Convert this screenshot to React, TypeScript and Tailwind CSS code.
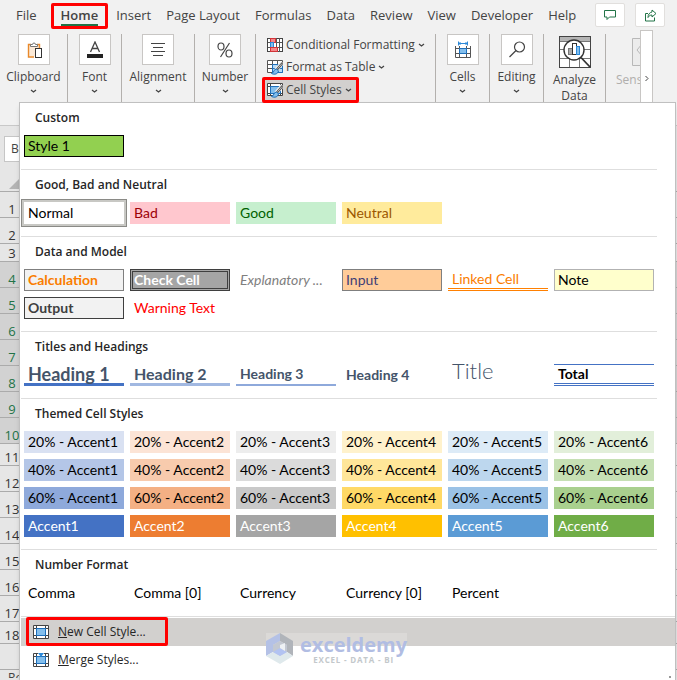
import React from 'react';

const ROWS = Array.from({ length: 18 }, (_, i) => i + 1);

type CellStyle = { name: string; className: string };

const SECTIONS: { title: string; cells: CellStyle[] }[] = [
  { title: 'Custom', cells: [{ name: 'Style 1', className: 'bg-[#92d050] border border-black px-[3px] text-sm text-black' }] },
  {
    title: 'Good, Bad and Neutral',
    cells: [
      { name: 'Normal', className: 'bg-white px-1 text-sm text-black outline-2 outline-[#c8c8c4] ring-3 ring-[#8a8a86]' },
      { name: 'Bad', className: 'bg-[#ffc7ce] px-1 text-sm text-[#9c0006]' },
      { name: 'Good', className: 'bg-[#c6efce] px-1 text-sm text-[#006100]' },
      { name: 'Neutral', className: 'bg-[#ffeb9c] px-1 text-sm text-[#9c5700]' },
    ],
  },
  {
    title: 'Data and Model',
    cells: [
      { name: 'Calculation', className: 'bg-[#f2f2f2] border border-[#7f7f7f] px-[3px] text-sm font-bold text-[#fa7d00]' },
      { name: 'Check Cell', className: 'bg-[#a5a5a5] border-3 border-double border-[#3f3f3f] px-px text-sm font-bold text-white' },
      { name: 'Explanatory ...', className: 'px-1 text-sm italic text-[#7f7f7f]' },
      { name: 'Input', className: 'bg-[#ffcc99] border border-[#7f7f7f] px-[3px] text-sm text-[#3f3f76]' },
      { name: 'Linked Cell', className: 'border-b-3 border-double border-[#ff8001] px-1 text-sm text-[#fa7d00]' },
      { name: 'Note', className: 'bg-[#ffffcc] border border-[#b2b2b2] px-[3px] text-sm text-black' },
      { name: 'Output', className: 'bg-[#f2f2f2] border border-[#3f3f3f] px-[3px] text-sm font-bold text-[#3f3f3f]' },
      { name: 'Warning Text', className: 'px-1 text-sm text-[#ff0000]' },
    ],
  },
  {
    title: 'Titles and Headings',
    cells: [
      { name: 'Heading 1', className: 'border-b-3 border-[#4472c4] px-1 text-lg font-bold text-[#44546a]' },
      { name: 'Heading 2', className: 'border-b-3 border-[#a1b8e1] px-1 text-base font-bold text-[#44546a]' },
      { name: 'Heading 3', className: 'border-b-2 border-[#8ea9db] px-1 text-sm font-bold text-[#44546a]' },
      { name: 'Heading 4', className: 'px-1 text-sm font-bold text-[#44546a]' },
      { name: 'Title', className: 'px-1 pb-2 text-[22px] font-light text-[#44546a]' },
      { name: 'Total', className: 'border-t border-b-3 border-[#4472c4] [border-bottom-style:double] px-1 text-sm font-bold text-black' },
    ],
  },
  {
    title: 'Themed Cell Styles',
    cells: [
      { name: '20% - Accent1', className: 'bg-[#d9e1f2] px-1 text-sm text-black' },
      { name: '20% - Accent2', className: 'bg-[#fce4d6] px-1 text-sm text-black' },
      { name: '20% - Accent3', className: 'bg-[#ededed] px-1 text-sm text-black' },
      { name: '20% - Accent4', className: 'bg-[#fff2cc] px-1 text-sm text-black' },
      { name: '20% - Accent5', className: 'bg-[#ddebf7] px-1 text-sm text-black' },
      { name: '20% - Accent6', className: 'bg-[#e2efda] px-1 text-sm text-black' },
      { name: '40% - Accent1', className: 'bg-[#b4c6e7] px-1 text-sm text-black' },
      { name: '40% - Accent2', className: 'bg-[#f8cbad] px-1 text-sm text-black' },
      { name: '40% - Accent3', className: 'bg-[#dbdbdb] px-1 text-sm text-black' },
      { name: '40% - Accent4', className: 'bg-[#ffe699] px-1 text-sm text-black' },
      { name: '40% - Accent5', className: 'bg-[#bdd7ee] px-1 text-sm text-black' },
      { name: '40% - Accent6', className: 'bg-[#c6e0b4] px-1 text-sm text-black' },
      { name: '60% - Accent1', className: 'bg-[#8ea9db] px-1 text-sm text-black' },
      { name: '60% - Accent2', className: 'bg-[#f4b084] px-1 text-sm text-black' },
      { name: '60% - Accent3', className: 'bg-[#c9c9c9] px-1 text-sm text-black' },
      { name: '60% - Accent4', className: 'bg-[#ffd966] px-1 text-sm text-black' },
      { name: '60% - Accent5', className: 'bg-[#9bc2e6] px-1 text-sm text-black' },
      { name: '60% - Accent6', className: 'bg-[#a9d08e] px-1 text-sm text-black' },
      { name: 'Accent1', className: 'bg-[#4472c4] px-1 text-sm text-white' },
      { name: 'Accent2', className: 'bg-[#ed7d31] px-1 text-sm text-white' },
      { name: 'Accent3', className: 'bg-[#a5a5a5] px-1 text-sm text-white' },
      { name: 'Accent4', className: 'bg-[#ffc000] px-1 text-sm text-white' },
      { name: 'Accent5', className: 'bg-[#5b9bd5] px-1 text-sm text-white' },
      { name: 'Accent6', className: 'bg-[#70ad47] px-1 text-sm text-white' },
    ],
  },
  {
    title: 'Number Format',
    cells: [
      { name: 'Comma', className: 'px-1 text-sm text-black' },
      { name: 'Comma [0]', className: 'px-1 text-sm text-black' },
      { name: 'Currency', className: 'px-1 text-sm text-black' },
      { name: 'Currency [0]', className: 'px-1 text-sm text-black' },
      { name: 'Percent', className: 'px-1 text-sm text-black' },
    ],
  },
];

function Chevron() {
  return (
    <svg width="7" height="5" viewBox="0 0 7 5" fill="none" stroke="#444" strokeWidth="1.3" className="shrink-0">
      <path d="M1 1l2.500 2L6 1" />
    </svg>
  );
}

function ClipboardIcon() {
  return (
    <svg width="18" height="18" viewBox="0 0 18 18" fill="none">
      <path d="M3.500 3.500h11v12h-11z" fill="#fbe9d7" />
      <path d="M6 3.500H3.500v12.500H9M12 3.500h2.500V7" stroke="#e8892b" strokeWidth="1.400" />
      <path d="M5.500 5.500v-2h2a1.500 1.500 0 0 1 3 0h2v2z" fill="#fff" stroke="#777" />
      <rect x="10.500" y="7.500" width="6" height="9" fill="#fff" stroke="#333" />
    </svg>
  );
}

function FontIcon() {
  return (
    <svg width="18" height="18" viewBox="0 0 18 18" fill="none">
      <path d="M4.500 11L9 1l4.500 10M6 7.500h6" stroke="#444" strokeWidth="1.3" />
      <rect x="1" y="13" width="16" height="4" fill="#222" />
    </svg>
  );
}

function AlignIcon() {
  return (
    <svg width="18" height="18" viewBox="0 0 18 18" stroke="#444">
      <path d="M2 2.500h14M4 6.500h10M2 10.500h14M4 14.500h10" />
    </svg>
  );
}

function PercentIcon() {
  return (
    <svg width="18" height="18" viewBox="0 0 18 18" fill="none" stroke="#444" strokeWidth="1.2">
      <ellipse cx="5" cy="5.500" rx="3" ry="3.500" />
      <ellipse cx="13" cy="12.500" rx="3" ry="3.500" />
      <path d="M13.500 2l-9 14" />
    </svg>
  );
}

function CellsIcon() {
  return (
    <svg width="18" height="18" viewBox="0 0 18 18" fill="none">
      <path d="M1.500 5v11.500h15V5M5.500 5v11.500M12.500 5v11.500M1.500 7.500h15M1.500 12.500h15" stroke="#555" />
      <rect x="5.500" y="7.500" width="7" height="5" fill="#83beec" stroke="#1e6fba" />
      <path d="M4.500 .5v4M13.500 .5v4M5 2.500h8M6.500 1L5 2.500 6.500 4M11.500 1L13 2.500 11.500 4" stroke="#2b88d8" />
    </svg>
  );
}

function SearchIcon() {
  return (
    <svg width="18" height="18" viewBox="0 0 18 18" fill="none" stroke="#444" strokeWidth="1.2">
      <circle cx="11.500" cy="6" r="5" />
      <path d="M8 9.500L1.500 16" />
    </svg>
  );
}

function AnalyzeIcon() {
  return (
    <svg width="32" height="32" viewBox="0 0 32 32" fill="none" className="shrink-0">
      <rect x=".5" y=".5" width="31" height="31" fill="#fff" stroke="#444" />
      <rect x="1" y="1" width="30" height="4" fill="#b5b5b5" />
      <path d="M1 5.500h30M1 13.500h30M1 22.500h30M10.500 22v9M20.500 22v9" stroke="#777" />
      <circle cx="15" cy="14" r="10" fill="#fff" stroke="#333" strokeWidth="1.400" />
      <rect x="9.500" y="12.500" width="4" height="6" fill="#aaa" stroke="#777" />
      <rect x="13.500" y="7.500" width="4" height="11" fill="#fff" stroke="#333" />
      <rect x="17.500" y="10.500" width="3" height="8" fill="#83beec" stroke="#2b88d8" />
      <path d="M22 21.500l9 9.500" stroke="#333" strokeWidth="1.800" />
    </svg>
  );
}

function ConditionalIcon() {
  return (
    <svg width="16" height="16" viewBox="0 0 16 16" fill="none" className="shrink-0">
      <rect x=".5" y="1.500" width="15" height="13" fill="#fff" stroke="#444" />
      <path d="M3.500 1v14M12.500 1v14M9.500 1v14M1 5.500h14M1 10.500h14" stroke="#555" />
      <rect x="3.500" y="1.500" width="5" height="4" fill="#f4878a" stroke="#d13438" />
      <rect x="3.500" y="5.500" width="3" height="5" fill="#83beec" stroke="#2b88d8" />
      <rect x="3.500" y="10.500" width="7" height="4" fill="#f4878a" stroke="#d13438" />
    </svg>
  );
}

function Brush() {
  return (
    <>
      <path d="M15.500 3.500L9 11" stroke="#f1f1f1" strokeWidth="4" />
      <path d="M15.500 4L10 10.500" stroke="#444" strokeWidth="2.200" />
      <path d="M15 4.500L10.500 9.800" stroke="#fff" strokeWidth=".7" />
      <path d="M9.500 10c-3 0-2 3.500-5 4.500 3 1.500 6.500.5 7-2.500z" fill="#83beec" stroke="#1e6fba" />
    </>
  );
}

function TableIcon() {
  return (
    <svg width="16" height="16" viewBox="0 0 16 16" fill="none" className="shrink-0">
      <path d="M.5 1.500h15v12H.5zM5.500 1v13M10.500 1v13M1 5.500h14M1 9.500h14" fill="#fff" stroke="#555" />
      <path d="M5.500 5.500h10v8h-10z" fill="#b9dbf5" stroke="#1e6fba" />
      <path d="M10.500 6v7M6 9.500h9" stroke="#1e6fba" />
      <Brush />
    </svg>
  );
}

function StylesIcon() {
  return (
    <svg width="16" height="16" viewBox="0 0 16 16" fill="none" className="shrink-0">
      <path d="M.5 1.500h15v12H.5zM3.500 1v13M13.500 1v13M1 4.500h14M1 11.500h14" fill="#fff" stroke="#444" />
      <path d="M3.500 4.500h10v7h-10z" fill="#83beec" stroke="#1e6fba" />
      <Brush />
    </svg>
  );
}

function NewStyleIcon({ merge = false }: { merge?: boolean }) {
  return (
    <svg width="16" height="16" viewBox="0 0 16 16" fill="none" className="shrink-0">
      <path d="M.5 1.500h15v13H.5zM3.500 1v14M12.500 1v14M1 4.500h14M1 11.500h14" fill="#fff" stroke="#444" />
      <rect x="3.500" y="4.500" width="9" height="7" fill="#83beec" stroke="#1e6fba" />
      {merge && <path d="M5 0h6v2H5z" fill="#fff" />}
      {merge && <path d="M5 1h6L8 5z" fill="#2b88d8" />}
    </svg>
  );
}

function Tab({ label }: { label: string }) {
  return <button className="h-[26px] whitespace-nowrap">{label}</button>;
}

// Collapsed ribbon group: boxed icon, label, chevron
function RibbonGroup({ icon, label, width }: { icon: React.ReactNode; label: string; width: string }) {
  return (
    <button className={`${width} flex h-[72px] shrink-0 flex-col items-center border-r border-[#b3b0ad] text-[#444]`}>
      <span className="flex h-[31px] w-8 shrink-0 items-center justify-center border border-[#c8c6c4] bg-white">{icon}</span>
      <span className="mt-1 text-xs leading-4">{label}</span>
      <span className="mt-1">
        <Chevron />
      </span>
    </button>
  );
}

function RibbonCommand({ icon, label }: { icon: React.ReactNode; label: string }) {
  return (
    <button className="flex h-[22px] items-center gap-[3px] pl-[11px] whitespace-nowrap">
      {icon}
      <span>{label}</span>
      <Chevron />
    </button>
  );
}

function Watermark() {
  return (
    <div className="pointer-events-none absolute top-[530px] left-[246px] flex h-8 items-center gap-1.5 bg-white/20">
      <svg width="28" height="32" viewBox="0 0 28 32">
        <path d="M14 0L0 8v15l7-4v-7l7-4z" fill="#b4c1e6" />
        <path d="M14 0l13 8v15l-6-4v-7l-7-4z" fill="#b0b4ba" />
        <path d="M0 23l7-4 7 4 7-4 6 4-13 8z" fill="#dfe9ec" />
        <path d="M7 12l7-4 7 4v7l-7 4-7-4z" fill="#c3c8d2" />
        <path d="M7 19l7-4 7 4-7 4z" fill="#b2c3f2" />
        <path d="M14 12l5-2v8l-5-3z" fill="#eef1f4" />
      </svg>
      <div className="flex flex-col items-center font-bold">
        <span className="text-xl leading-[22px] text-[#b1bde3]">exceldemy</span>
        <span className="text-[8px] leading-[8px] tracking-widest text-[#c3c8cb]">EXCEL - DATA - BI</span>
      </div>
    </div>
  );
}

function StylesMenu() {
  return (
    <div className="absolute top-[102px] right-px bottom-0 left-[19px] border-t border-r border-l border-[#c0c0c0] bg-white pl-px shadow-md">
      {SECTIONS.map((section, i) => (
        <section
          key={section.title}
          className={`${i === SECTIONS.length - 1 ? '' : 'mr-[18px]'} border-b border-[#dedede] pb-3`}
        >
          <h2 className="h-8 pl-3.5 text-xs leading-[30px] font-semibold text-[#262626]">{section.title}</h2>
          <div className={`${i === SECTIONS.length - 1 ? 'pr-[21px]' : 'pr-[3px]'} grid grid-cols-6 gap-1.5 pl-[3px]`}>
            {section.cells.map((cell) => (
              <button
                key={cell.name}
                className={`flex h-[22px] items-center text-left font-[Lato,'Noto_Sans',sans-serif] leading-5 whitespace-nowrap ${cell.className}`}
              >
                {cell.name}
              </button>
            ))}
          </div>
        </section>
      ))}

      <div className="mt-px flex flex-col text-xs text-[#262626]">
        <button className="flex h-7 items-stretch bg-[#d2d0ce] text-left">
          <span className="-mt-px ml-[5px] flex w-[142px] items-center gap-[9px] rounded-xs border-3 border-[#ff0000] pl-1">
            <NewStyleIcon />
            <span>
              <u>N</u>ew Cell Style...
            </span>
          </span>
        </button>
        <button className="flex h-7 items-center gap-[9px] pl-3 text-left">
          <NewStyleIcon merge />
          <span>
            <u>M</u>erge Styles...
          </span>
        </button>
      </div>

      <Watermark />
      <span className="absolute right-1 bottom-0.5 size-0.5 bg-[#999]" />
    </div>
  );
}

export default function App() {
  return (
    <div className="relative flex min-h-screen flex-col overflow-hidden bg-[#e6e6e6] font-['Open_Sans','Noto_Sans',sans-serif] text-xs text-[#444]">
      {/* Tab strip */}
      <nav className="flex h-[34px] items-start bg-[#f1f1f1] pt-[3px] pr-3 pl-4 text-[13px]">
        <Tab label="File" />
        <button className="mr-2 ml-3.5 flex h-[26px] items-center rounded-xs border-3 border-[#ff0000] px-[7px] font-semibold">
          <span className="border-b-2 border-[#217346] leading-[18px]">Home</span>
        </button>
        <div className="flex gap-[15px]">
          <Tab label="Insert" />
          <Tab label="Page Layout" />
          <Tab label="Formulas" />
          <Tab label="Data" />
          <Tab label="Review" />
          <Tab label="View" />
          <Tab label="Developer" />
          <Tab label="Help" />
        </div>
        <div className="ml-auto flex gap-2.5">
          <button aria-label="Comments" className="flex h-6 w-[30px] items-center justify-center rounded-xs border border-[#e1dfdd] bg-white">
            <svg width="12" height="12" viewBox="0 0 12 12" fill="none" stroke="#217346">
              <path d="M.5 1.500h11v6.500H5.500L3 10.500V8H.5z" />
            </svg>
          </button>
          <button aria-label="Share" className="flex h-6 w-[30px] items-center justify-center rounded-xs border border-[#e1dfdd] bg-white">
            <svg width="13" height="13" viewBox="0 0 13 13" fill="none" stroke="#217346">
              <path d="M4 4.500H1.500v7.500h9V8.500" />
              <path d="M8 1l4 3.500L8 8V6C6 6 5 7 4 8.500 4 5.500 5.500 3.500 8 3z" />
            </svg>
          </button>
        </div>
      </nav>

      {/* Ribbon */}
      <div className="flex h-[92px] items-start border-b border-[#c8c8c8] bg-[#f1f1f1]">
        <RibbonGroup icon={<ClipboardIcon />} label="Clipboard" width="w-[68px]" />
        <RibbonGroup icon={<FontIcon />} label="Font" width="w-[54px]" />
        <RibbonGroup icon={<AlignIcon />} label="Alignment" width="w-[73px]" />
        <RibbonGroup icon={<PercentIcon />} label="Number" width="w-[61px]" />
        <div className="flex h-[72px] w-[180px] shrink-0 flex-col items-start border-r border-[#b3b0ad]">
          <RibbonCommand icon={<ConditionalIcon />} label="Conditional Formatting" />
          <RibbonCommand icon={<TableIcon />} label="Format as Table" />
          <button className="relative z-10 -mt-px ml-1.5 flex h-[26px] shrink-0 items-center gap-[3px] rounded-xs border-3 border-[#ff0000] bg-[#d2d0ce] pr-1 pl-0.5 whitespace-nowrap">
            <StylesIcon />
            <span>Cell Styles</span>
            <Chevron />
          </button>
        </div>
        <RibbonGroup icon={<CellsIcon />} label="Cells" width="w-[54px]" />
        <RibbonGroup icon={<SearchIcon />} label="Editing" width="w-[54px]" />
        <button className="flex h-[72px] w-[62px] shrink-0 flex-col items-center border-r border-[#b3b0ad] pt-0.5 leading-4">
          <AnalyzeIcon />
          <span className="mt-1">Analyze</span>
          <span>Data</span>
        </button>
        <div className="flex h-[72px] min-w-0 flex-1 flex-col overflow-hidden pl-2.5 text-[#b0aeac]">
          <svg width="32" height="30" viewBox="0 0 32 30" fill="none" stroke="#b8b8b8" className="mt-1 ml-4 shrink-0">
            <path d="M.5 .5h18v27H.5z" fill="#ececec" />
            <path d="M10 6l-5 6 5 6M12 9l-4 3 4 4" />
          </svg>
          <span className="mt-1 leading-4">Sensitivity</span>
        </div>
        <button aria-label="Scroll ribbon" className="mr-6 -mt-1 flex h-20 w-[13px] shrink-0 items-center justify-center border border-[#c8c6c4] bg-white pt-4">
          <svg width="4" height="7" viewBox="0 0 4 7" fill="none" stroke="#444">
            <path d="M.5 1L3 3.500.5 6" />
          </svg>
        </button>
      </div>

      {/* Name box and select-all corner */}
      <div className="flex h-[66px] flex-col items-start justify-between border-b border-[#ababab] pt-2.5">
        <span className="ml-1 flex h-[26px] w-20 items-center border border-[#c6c6c6] bg-white pl-1.5">B4</span>
        <svg width="10" height="10" viewBox="0 0 10 10" className="mb-0.5 ml-[9px]">
          <path d="M10 0v10H0z" fill="#b4b4b4" />
        </svg>
      </div>

      {/* Row headers, 4 to 10 are inside the selection */}
      <div className="flex flex-col text-[13px] leading-4">
        {ROWS.map((row) => (
          <div
            key={row}
            className={`${row === 3 ? 'h-[18px]' : row === 11 || row === 18 ? 'h-[22px]' : 'h-[26px]'} ${
              row >= 4 && row <= 10 ? 'bg-[#d2d2d2] text-[#217346]' : 'text-[#333]'
            } flex items-end border-b border-[#ababab]`}
          >
            <span className="w-6 text-center">{row}</span>
          </div>
        ))}
      </div>
      <div className="h-[26px] shrink-0 border-b border-[#ababab]" />
      <div className="h-2 shrink-0 overflow-hidden pl-2 leading-4">Ready</div>

      <StylesMenu />
    </div>
  );
}
